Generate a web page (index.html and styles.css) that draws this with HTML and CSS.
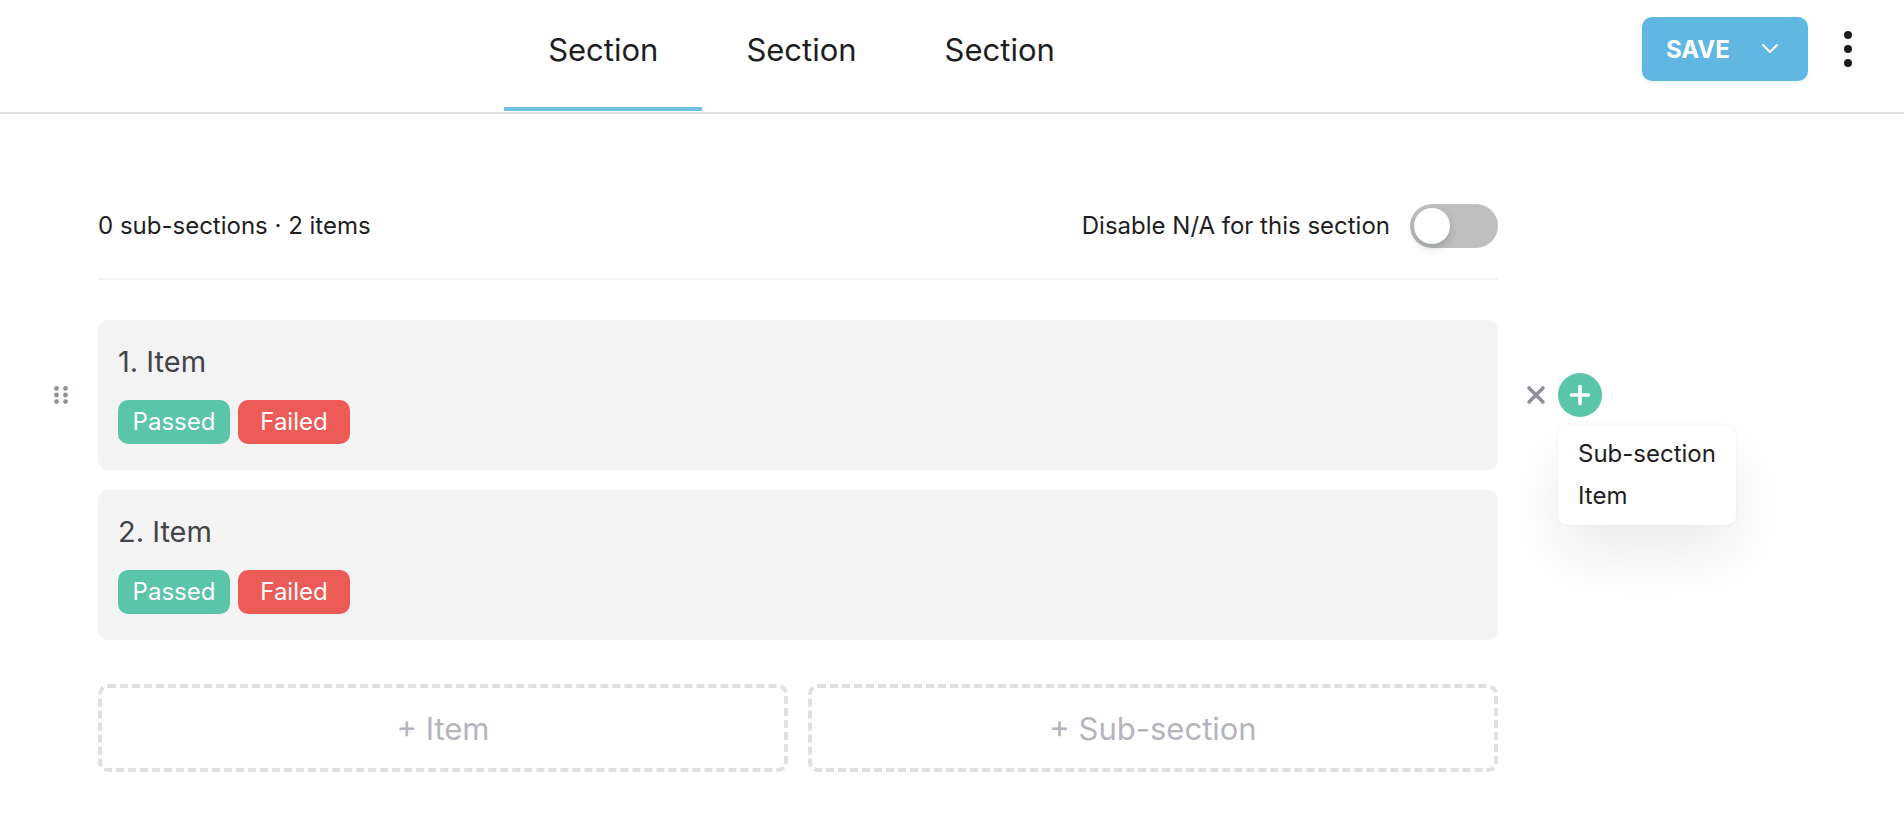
FILE: index.html
```
<!DOCTYPE html>
<html lang="en">

<head>
    <meta charset="UTF-8">
    <meta name="viewport" content="width=device-width, initial-scale=1.0">
    <title>Sections</title>
    <link rel="stylesheet" href="styles.css">
</head>

<body>
    <header class="header">
        <nav class="tabs">
            <a href="#" class="tab active">Section</a>
            <a href="#" class="tab">Section</a>
            <a href="#" class="tab">Section</a>
        </nav>
        <div class="header-actions">
            <button class="save-btn" type="button">
                SAVE
                <svg width="16" height="10" viewBox="0 0 16 10" fill="none" stroke="#fff" stroke-width="2" stroke-linecap="round" stroke-linejoin="round">
                    <path d="M1 1l7 7 7-7" />
                </svg>
            </button>
            <button class="icon-btn" type="button" aria-label="More options">
                <svg width="8" height="36" viewBox="0 0 8 36" fill="#1e1e1f">
                    <circle cx="4" cy="4" r="4" />
                    <circle cx="4" cy="18" r="4" />
                    <circle cx="4" cy="32" r="4" />
                </svg>
            </button>
        </div>
    </header>

    <main class="content">
        <div class="row">
            <div class="summary">
                <span>0 sub-sections · 2 items</span>
                <label class="toggle-label" for="disable-na">
                    Disable N/A for this section
                    <input class="toggle" type="checkbox" id="disable-na">
                </label>
            </div>
        </div>

        <div class="row">
            <button class="icon-btn drag-handle" type="button" aria-label="Move item">
                <svg width="14" height="18" viewBox="0 0 14 18" fill="#908f9b">
                    <circle cx="2.5" cy="2.4" r="2.4" />
                    <circle cx="11.5" cy="2.4" r="2.4" />
                    <circle cx="2.5" cy="9" r="2.4" />
                    <circle cx="11.5" cy="9" r="2.4" />
                    <circle cx="2.5" cy="15.6" r="2.4" />
                    <circle cx="11.5" cy="15.6" r="2.4" />
                </svg>
            </button>
            <section class="card">
                <h2>1. Item</h2>
                <div class="badges">
                    <span class="badge passed">Passed</span>
                    <span class="badge failed">Failed</span>
                </div>
            </section>
            <div class="row-actions">
                <button class="icon-btn" type="button" aria-label="Remove item">
                    <svg width="20" height="20" viewBox="0 0 20 20" fill="none" stroke="#908f9b" stroke-width="3.6" stroke-linecap="round">
                        <path d="M3 3l14 14M17 3L3 17" />
                    </svg>
                </button>
                <div class="add-menu">
                    <button class="add-btn" type="button" aria-label="Add">
                        <svg width="22" height="22" viewBox="0 0 22 22" fill="none" stroke="#fff" stroke-width="3.6" stroke-linecap="round">
                            <path d="M11 2.6v16.8M2.6 11h16.8" />
                        </svg>
                    </button>
                    <div class="menu">
                        <button type="button">Sub-section</button>
                        <button type="button">Item</button>
                    </div>
                </div>
            </div>
        </div>

        <div class="row">
            <section class="card">
                <h2>2. Item</h2>
                <div class="badges">
                    <span class="badge passed">Passed</span>
                    <span class="badge failed">Failed</span>
                </div>
            </section>
        </div>

        <div class="row">
            <div class="add-buttons">
                <button type="button">+ Item</button>
                <button type="button">+ Sub-section</button>
            </div>
        </div>
    </main>
</body>

</html>
```
FILE: styles.css
```
* {
    box-sizing: border-box;
}

body {
    margin: 0;
    font-family: 'Inter', sans-serif;
    font-size: 24px;
    line-height: 42px;
    color: #1e1e1f;
    background: #fff;
}

button {
    font-family: inherit;
    border: none;
    background: none;
    padding: 0;
    cursor: pointer;
}

svg {
    display: block;
}

.header {
    display: grid;
    grid-template-columns: 1fr 406px;
    height: 114px;
    padding-left: 105px;
    border-bottom: 2px solid #e0e0e0;
}

.tabs {
    display: flex;
    justify-content: center;
    padding-bottom: 1px;
}

.tab {
    display: flex;
    align-items: center;
    padding: 0 44px 8px;
    border-bottom: 4px solid transparent;
    font-size: 31px;
    color: #1e1e1f;
    text-decoration: none;
}

.tab.active {
    border-bottom-color: #71bfe4;
}

.header-actions {
    display: flex;
    align-items: center;
    justify-content: flex-end;
    gap: 36px;
    padding: 0 52px 14px 0;
}

.save-btn {
    display: flex;
    align-items: center;
    justify-content: space-between;
    width: 166px;
    height: 64px;
    padding: 0 30px 0 24px;
    border-radius: 10px;
    background: #60b7e2;
    box-shadow: 0 2px 4px rgba(96, 183, 226, 0.15);
    font-size: 24px;
    font-weight: 700;
    color: #fff;
}

.content {
    padding: 64px 0 50px;
}

/* handle | content | actions */
.row {
    display: grid;
    grid-template-columns: 98px 1fr 406px;
    align-items: center;
    margin-bottom: 20px;
}

.summary,
.card,
.add-buttons {
    grid-column: 2;
}

.summary {
    display: flex;
    justify-content: space-between;
    align-items: center;
    height: 102px;
    margin-bottom: 20px;
    padding-bottom: 4px;
    border-bottom: 2px solid #f2f2f2;
}

.toggle-label {
    display: flex;
    align-items: center;
    gap: 20px;
}

.toggle {
    appearance: none;
    width: 88px;
    height: 44px;
    margin: 0;
    padding: 4px;
    border-radius: 22px;
    background: #bfbfbf;
    cursor: pointer;
}

.toggle::before {
    content: "";
    display: block;
    width: 36px;
    height: 36px;
    border-radius: 50%;
    background: #fff;
    box-shadow: 0 4px 8px rgba(0, 35, 11, 0.2);
}

.toggle:checked {
    background: #5bc5aa;
}

.toggle:checked::before {
    margin-left: 44px;
}

.drag-handle {
    justify-self: end;
    margin-right: 30px;
}

.card {
    height: 150px;
    padding: 20px;
    border-radius: 10px;
    background: #f3f3f3;
}

.card h2 {
    margin: 0 0 16px;
    font-size: 29px;
    font-weight: 400;
    line-height: 44px;
    color: #444448;
}

.badges {
    display: flex;
    gap: 8px;
}

.badge {
    width: 112px;
    height: 44px;
    border-radius: 10px;
    line-height: 44px;
    text-align: center;
    color: #fff;
}

.passed {
    background: #5bc5aa;
}

.failed {
    background: #ed5b56;
}

.row-actions {
    display: flex;
    align-items: center;
    gap: 12px;
    padding-left: 28px;
}

.add-menu {
    position: relative;
}

.add-btn {
    display: flex;
    align-items: center;
    justify-content: center;
    width: 44px;
    height: 44px;
    border-radius: 50%;
    background: #5bc5aa;
}

.menu {
    position: absolute;
    top: 52px;
    left: 0;
    z-index: 1;
    padding: 8px 20px;
    border-radius: 10px;
    background: #fff;
    box-shadow: 0 30px 60px rgba(0, 0, 0, 0.08), 0 0 4px rgba(0, 0, 0, 0.04);
}

.menu button {
    display: block;
    font-size: 24px;
    line-height: 42px;
    color: #1e1e1f;
    white-space: nowrap;
}

.add-buttons {
    display: grid;
    grid-template-columns: 1fr 1fr;
    gap: 20px;
    margin-top: 24px;
}

.add-buttons button {
    height: 88px;
    border: 4px dashed #e0e0e0;
    border-radius: 10px;
    font-size: 31px;
    color: #b5b4bd;
}
```
